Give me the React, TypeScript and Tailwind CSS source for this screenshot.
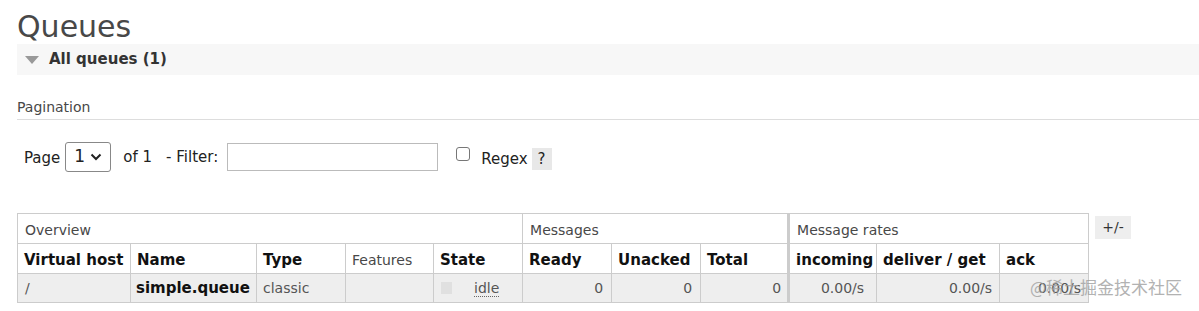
import React from "react";

const font = { fontFamily: '"DejaVu Sans", Verdana, sans-serif' };

const cols = [
  { label: "Virtual host", w: "w-[113px]", bold: true },
  { label: "Name", w: "w-[126px]", bold: true },
  { label: "Type", w: "w-[89px]", bold: true },
  { label: "Features", w: "w-[88px]", bold: false },
  { label: "State", w: "w-[89px]", bold: true },
  { label: "Ready", w: "w-[89px]", bold: true },
  { label: "Unacked", w: "w-[89px]", bold: true },
  { label: "Total", w: "w-[88px]", bold: true },
  { label: "incoming", w: "w-[88px]", bold: true, sep: true },
  { label: "deliver / get", w: "w-[123px]", bold: true },
  { label: "ack", w: "w-[89px]", bold: true },
];

export default function App() {
  return (
    <div className="relative w-[1199px] h-[311px] bg-white overflow-hidden text-[#484848]" style={font}>
      <h1 className="pl-[17px] pt-[10px] text-[30px] leading-[34px] text-[#484848]">Queues</h1>

      <div className="ml-[17px] h-[31px] bg-[#f7f7f7] flex items-center">
        <span className="ml-[8px] w-0 h-0 border-l-[7px] border-r-[7px] border-t-[8px] border-l-transparent border-r-transparent border-t-[#999]" />
        <span className="ml-[10px] text-[15px] font-bold text-[#333]">All queues (1)</span>
      </div>

      <div className="ml-[17px] mt-[23px] pb-[3px] border-b border-[#ddd] text-[14px] leading-[18px] text-[#484848]">
        Pagination
      </div>

      <div className="ml-[24px] mt-[22px] flex items-center text-[15px] text-[#222] h-[30px]">
        <span className="mt-[2px]">Page</span>
        <div className="ml-[5px] w-[46px] h-[30px] border border-[#888] rounded-[3px] flex items-center justify-between px-[8px] text-[17px]">
          <span>1</span>
          <svg width="12" height="8" viewBox="0 0 12 8">
            <path d="M1.5 1.5 L6 6 L10.5 1.5" fill="none" stroke="#222" strokeWidth="2" />
          </svg>
        </div>
        <span className="ml-[12px] mt-[1px]">of 1</span>
        <span className="ml-[14px] mt-[1px]">- Filter:</span>
        <div className="ml-[9px] w-[211px] h-[28px] border border-[#bbb]" />
        <span className="ml-[18px] mt-[-6px] w-[14px] h-[14px] border border-[#777] rounded-[3px]" />
        <span className="ml-[11px] mt-[5px]">Regex</span>
        <span className="ml-[4px] mt-[4px] w-[20px] h-[22px] bg-[#e8e8e8] flex items-center justify-center text-[15px]">?</span>
      </div>

      <div className="ml-[17px] mt-[41px] flex items-start">
        <table className="table-fixed w-[1071px] border-collapse text-[15px] leading-[18px]">
          <colgroup>
            {cols.map((c) => (
              <col key={c.label} className={c.w} />
            ))}
          </colgroup>
          <thead>
            <tr className="h-[30px]">
              <td colSpan={5} className="border border-[#ccc] px-[7px] pt-[2px] text-[14px] text-[#484848]">Overview</td>
              <td colSpan={3} className="border border-[#ccc] px-[7px] pt-[2px] text-[14px] text-[#484848]">Messages</td>
              <td colSpan={3} className="border border-[#ccc] border-l-[3px] border-l-[#ccc] px-[7px] pt-[2px] text-[14px] text-[#484848]">Message rates</td>
            </tr>
            <tr className="h-[30px]">
              {cols.map((c) => (
                <th
                  key={c.label}
                  className={`border border-[#ccc] ${c.sep ? "border-l-[3px]" : ""} px-[6px] pt-[2px] text-left whitespace-nowrap ${c.bold ? "font-bold text-[#111]" : "font-normal text-[14px] text-[#484848]"}`}
                >
                  {c.label}
                </th>
              ))}
            </tr>
          </thead>
          <tbody>
            <tr className="h-[29px] bg-[#eeeeee] text-[14px] text-[#555]">
              <td className="border border-[#ccc] px-[7px]">/</td>
              <td className="border border-[#ccc] px-[5px] text-[15px] font-bold text-[#111] whitespace-nowrap">simple.queue</td>
              <td className="border border-[#ccc] px-[6px]">classic</td>
              <td className="border border-[#ccc] px-[6px]"></td>
              <td className="border border-[#ccc] px-[7px]">
                <div className="flex items-center">
                  <span className="w-[11px] h-[12px] bg-[#e0e0e0]" />
                  <span className="ml-[22px] border-b border-dotted border-[#666] leading-[16px]">idle</span>
                </div>
              </td>
              <td className="border border-[#ccc] px-[8px] text-right">0</td>
              <td className="border border-[#ccc] px-[8px] text-right">0</td>
              <td className="border border-[#ccc] px-[6px] text-right">0</td>
              <td className="border border-[#ccc] border-l-[3px] px-[12px] text-right">0.00/s</td>
              <td className="border border-[#ccc] px-[7px] text-right">0.00/s</td>
              <td className="border border-[#ccc] px-[7px] text-right">0.00/s</td>
            </tr>
          </tbody>
        </table>
        <span className="ml-[6px] mt-[3px] w-[36px] h-[23px] bg-[#eeeeee] flex items-center justify-center text-[14px] text-[#333]">+/-</span>
      </div>

      <div
        className="absolute left-[1030px] top-[276px] text-[17px] leading-[22px] text-[#a0a0a0] opacity-80"
        style={{ fontFamily: '"Noto Sans CJK SC", "DejaVu Sans", sans-serif' }}
      >
        @稀土掘金技术社区
      </div>
    </div>
  );
}
